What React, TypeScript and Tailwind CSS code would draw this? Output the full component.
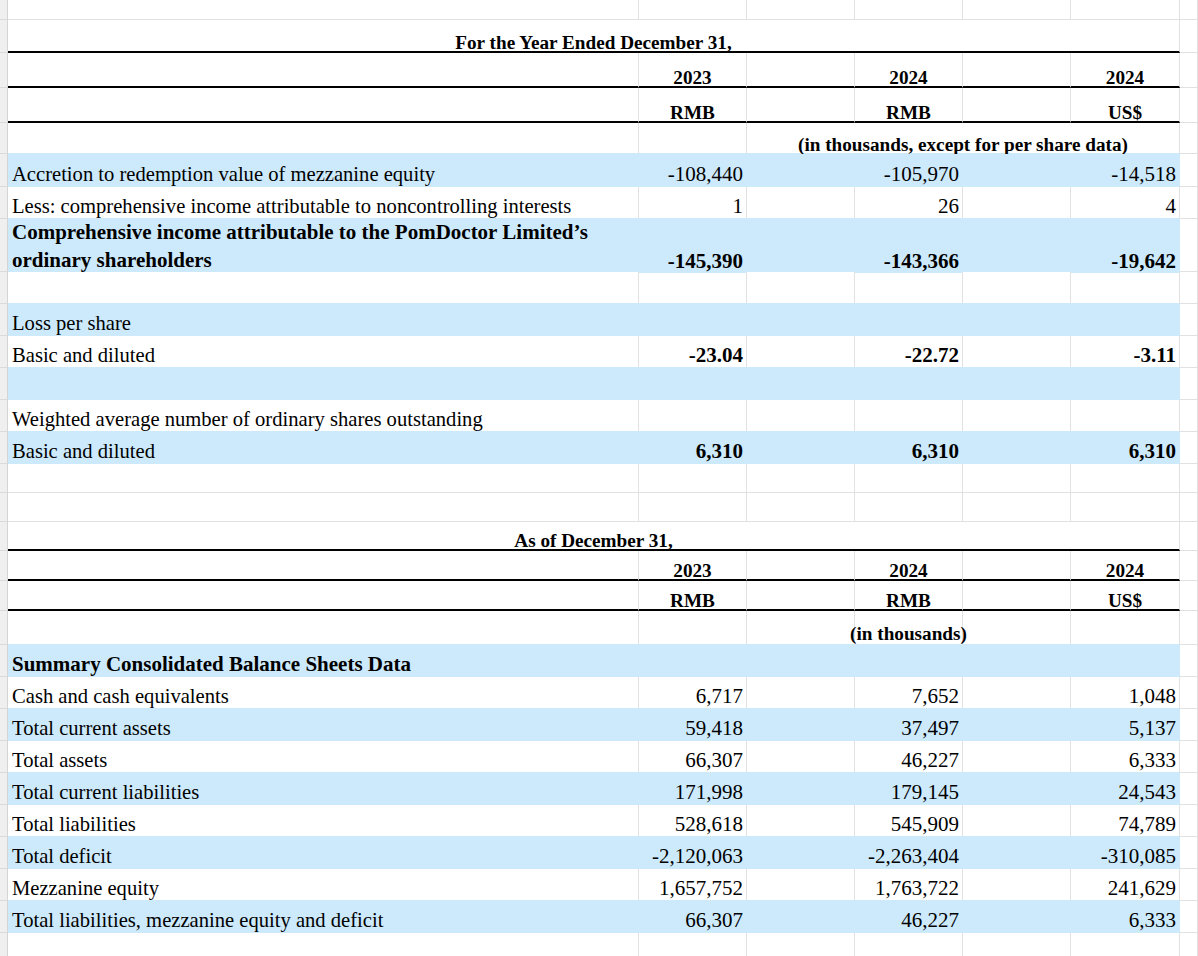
import React from 'react';

type Cell = {
  col: number;
  span?: number;
  text: React.ReactNode;
  align?: 'l' | 'r' | 'c';
  kind?: 'head' | 'body' | 'bold' | 'num' | 'boldnum' | 'boldlow';
  pad?: string;
};

type RowDef = {
  h: string;
  blue?: boolean;
  rule?: boolean;
  cells?: Cell[];
};

const GRID = 'grid grid-cols-[8px_631px_108px_108px_108px_108px_109px_1fr] grid-rows-[minmax(0,1fr)]';

const head = (col: number, text: string, span = 1, pad = ''): Cell => ({ col, text, span, align: 'c', kind: 'head', pad });
const label = (text: React.ReactNode, bold = false): Cell => ({ col: 0, text, align: 'l', kind: bold ? 'bold' : 'body' });
const vals = (a: string, b: string, c: string, kind: Cell['kind'] = 'num'): Cell[] => [
  { col: 1, text: a, align: 'r', kind },
  { col: 3, text: b, align: 'r', kind },
  { col: 5, text: c, align: 'r', kind },
];

const rows: RowDef[] = [
  { h: 'h-[20px]' },
  { h: 'h-[33px]', rule: true, cells: [head(0, 'For the Year Ended December 31,', 6)] },
  { h: 'h-[35px]', rule: true, cells: [head(1, '2023'), head(3, '2024'), head(5, '2024')] },
  { h: 'h-[35px]', rule: true, cells: [head(1, 'RMB'), head(3, 'RMB'), head(5, 'US$')] },
  { h: 'h-[31px]', cells: [head(2, '(in thousands, except for per share data)', 4)] },
  { h: 'h-[33px]', blue: true, cells: [label('Accretion to redemption value of mezzanine equity'), ...vals('-108,440', '-105,970', '-14,518')] },
  { h: 'h-[32px]', cells: [label('Less: comprehensive income attributable to noncontrolling interests'), ...vals('1', '26', '4')] },
  {
    h: 'h-[53px]',
    blue: true,
    cells: [
      label(
        <span className="block leading-[28px] -mb-[4px]">
          Comprehensive income attributable to the PomDoctor Limited’s
          <br />
          ordinary shareholders
        </span>,
        true,
      ),
      ...vals('-145,390', '-143,366', '-19,642', 'boldlow'),
    ],
  },
  { h: 'h-[32px]' },
  { h: 'h-[32px]', blue: true, cells: [label('Loss per share')] },
  { h: 'h-[32px]', cells: [label('Basic and diluted'), ...vals('-23.04', '-22.72', '-3.11', 'boldnum')] },
  { h: 'h-[32px]', blue: true },
  { h: 'h-[32px]', cells: [label('Weighted average number of ordinary shares outstanding')] },
  { h: 'h-[32px]', blue: true, cells: [label('Basic and diluted'), ...vals('6,310', '6,310', '6,310', 'boldnum')] },
  { h: 'h-[29px]' },
  { h: 'h-[29px]' },
  { h: 'h-[29px]', rule: true, cells: [head(0, 'As of December 31,', 6)] },
  { h: 'h-[30px]', rule: true, cells: [head(1, '2023'), head(3, '2024'), head(5, '2024')] },
  { h: 'h-[30px]', rule: true, cells: [head(1, 'RMB'), head(3, 'RMB'), head(5, 'US$')] },
  { h: 'h-[34px]', cells: [head(3, '(in thousands)', 1, 'pb-[2px]')] },
  { h: 'h-[32px]', blue: true, cells: [label('Summary Consolidated Balance Sheets Data', true)] },
  { h: 'h-[32px]', cells: [label('Cash and cash equivalents'), ...vals('6,717', '7,652', '1,048')] },
  { h: 'h-[32px]', blue: true, cells: [label('Total current assets'), ...vals('59,418', '37,497', '5,137')] },
  { h: 'h-[32px]', cells: [label('Total assets'), ...vals('66,307', '46,227', '6,333')] },
  { h: 'h-[32px]', blue: true, cells: [label('Total current liabilities'), ...vals('171,998', '179,145', '24,543')] },
  { h: 'h-[32px]', cells: [label('Total liabilities'), ...vals('528,618', '545,909', '74,789')] },
  { h: 'h-[32px]', blue: true, cells: [label('Total deficit'), ...vals('-2,120,063', '-2,263,404', '-310,085')] },
  { h: 'h-[32px]', cells: [label('Mezzanine equity'), ...vals('1,657,752', '1,763,722', '241,629')] },
  { h: 'h-[32px]', blue: true, cells: [label('Total liabilities, mezzanine equity and deficit'), ...vals('66,307', '46,227', '6,333')] },
  { h: 'h-[32px]' },
];

const TYPE: Record<string, string> = {
  head: 'text-[19.2px] font-bold leading-[17px]',
  bold: 'text-[21px] font-bold leading-[21px] pb-[1px]',
  body: 'text-[20.6px] leading-[21px] pb-[1px]',
  num: 'text-[21px] leading-[21px] pb-[1px]',
  boldnum: 'text-[21px] font-bold leading-[21px] pb-[1px]',
  boldlow: 'text-[21px] font-bold leading-[21px] -mb-[1px]',
};

function SheetRow({ def, nextBlue }: { def: RowDef; nextBlue: boolean }) {
  const out: React.ReactNode[] = [];
  let col = 0;
  while (col < 7) {
    const cell = def.cells?.find((c) => c.col === col);
    const span = cell?.span ?? 1;
    const inTable = col < 6;
    const blue = def.blue && inTable;
    const rule = def.rule && inTable;

    let border = 'border-r border-b border-[#e1e1e1]';
    if (blue) border = 'border-r border-b border-[#cdeafc]';
    else if (rule) border = 'border-r border-b-2 border-r-[#e1e1e1] border-b-black';
    else if (nextBlue && inTable) border = 'border-r border-b border-r-[#e1e1e1] border-b-[#cdeafc]';

    const spanCls = span === 6 ? 'col-span-6' : span === 4 ? 'col-span-4' : '';
    const align = cell?.align === 'r' ? 'justify-end pr-[3px]' : cell?.align === 'c' ? 'justify-center' : 'justify-start pl-[4px]';
    const type = TYPE[cell?.kind ?? 'body'];

    out.push(
      <div
        key={col}
        className={`${spanCls} ${border} ${blue ? 'bg-[#cdeafc]' : ''} min-h-0 flex items-end overflow-visible whitespace-nowrap ${align} ${type} ${cell?.pad ?? ''}`}
      >
        {cell ? cell.text : null}
      </div>,
    );
    col += span;
  }
  return (
    <div className={`${GRID} ${def.h}`}>
      <div className="border-r border-b border-r-[#d4d4d4] border-b-[#dadada] bg-[#efefef]" />
      {out}
    </div>
  );
}

export default function App() {
  return (
    <div className="w-[1198px] h-[956px] overflow-hidden bg-white text-black font-['Liberation_Serif','Times_New_Roman',serif]">
      {rows.map((r, i) => (
        <SheetRow key={i} def={r} nextBlue={!!rows[i + 1]?.blue} />
      ))}
    </div>
  );
}
